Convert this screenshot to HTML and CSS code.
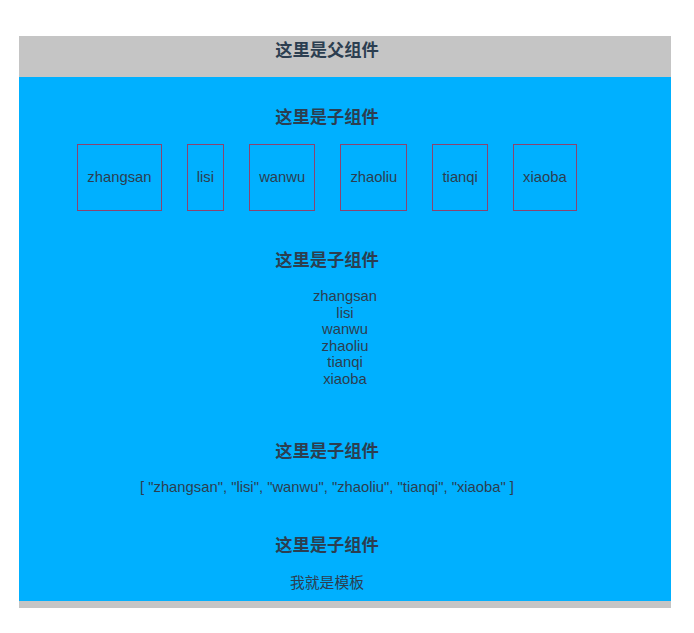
FILE: index.html
```html
<!DOCTYPE html>
<html lang="zh">
<head>
<meta charset="utf-8">
<title>父组件</title>
<link rel="stylesheet" href="styles.css">
</head>
<body>
<div class="parent">
  <div class="parent-head">
    <h3 class="title">这里是父组件</h3>
  </div>
  <div class="child">
    <section class="sec sec-boxes">
      <h3 class="title">这里是子组件</h3>
      <ul class="boxes">
        <li class="box">zhangsan</li>
        <li class="box">lisi</li>
        <li class="box">wanwu</li>
        <li class="box">zhaoliu</li>
        <li class="box">tianqi</li>
        <li class="box">xiaoba</li>
      </ul>
    </section>
    <section class="sec sec-list">
      <h3 class="title">这里是子组件</h3>
      <ul class="list">
        <li>zhangsan</li>
        <li>lisi</li>
        <li>wanwu</li>
        <li>zhaoliu</li>
        <li>tianqi</li>
        <li>xiaoba</li>
      </ul>
    </section>
    <section class="sec sec-array">
      <h3 class="title">这里是子组件</h3>
      <p class="text">[ "zhangsan", "lisi", "wanwu", "zhaoliu", "tianqi", "xiaoba" ]</p>
    </section>
    <section class="sec sec-tpl">
      <h3 class="title">这里是子组件</h3>
      <p class="text">我就是模板</p>
    </section>
  </div>
</div>
</body>
</html>
```

FILE: styles.css
```css
html, body {
  margin: 0;
  padding: 0;
  background: #ffffff;
}

body {
  padding: 36px 0 0 19px;
  font-family: "Liberation Sans", Arial, "Noto Sans CJK SC", sans-serif;
  font-size: 14.8px;
  line-height: 16.6px;
  color: #2c3e50;
}

.parent {
  width: 652px;
  background: #c5c5c5;
  padding-bottom: 7px;
}

.parent-head {
  height: 41px;
  padding: 4px 36px 0 0;
  box-sizing: border-box;
  text-align: center;
}

.title {
  margin: 0;
  font-family: "Liberation Sans", "Noto Sans CJK SC", sans-serif;
  font-size: 17.3px;
  line-height: 20px;
  font-weight: bold;
  color: #2c3e50;
  text-align: center;
}

.child {
  background: #00b0ff;
  padding: 30px 36px 10px 0;
  height: 524px;
  box-sizing: border-box;
}

.sec-boxes .boxes {
  list-style: none;
  margin: 17px 0 0;
  padding: 0;
  display: flex;
  justify-content: center;
  gap: 25.2px;
}

.box {
  border: 1px solid #8b4470;
  padding: 24.2px 9px;
  white-space: nowrap;
}

.sec-list {
  margin-top: 39px;
}

.list {
  list-style: none;
  margin: 18px 0 0;
  padding: 0 0 0 36px;
  text-align: center;
}

.sec-array {
  margin-top: 53.4px;
}

.text {
  margin: 17.7px 0 0;
  text-align: center;
}

.sec-tpl {
  margin-top: 39.7px;
}

.sec-tpl .text {
  margin-top: 18.7px;
  font-family: "Noto Sans CJK SC", sans-serif;
}
```
